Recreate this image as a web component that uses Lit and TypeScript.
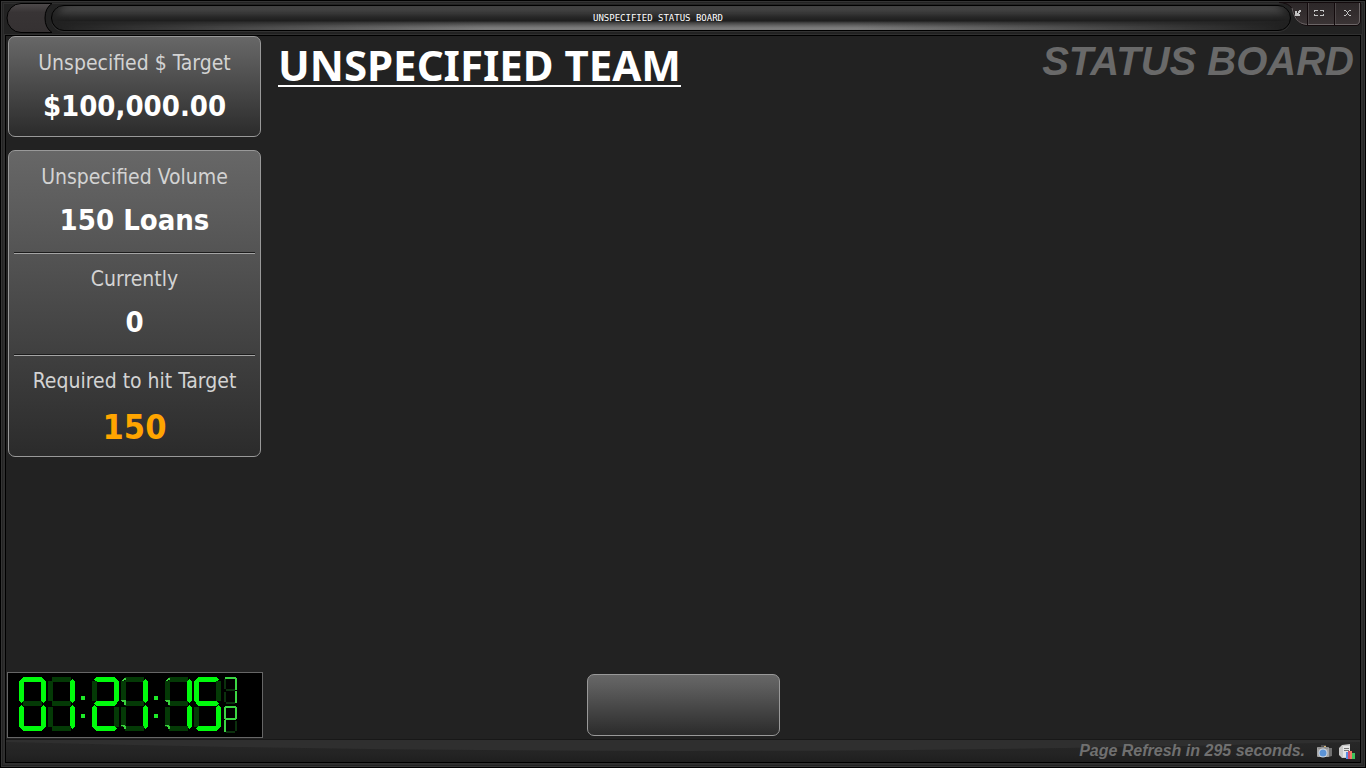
import { LitElement, html, svg, css } from "lit";
import { customElement, property } from "lit/decorators.js";

// Segment masks, in the order: top, top-left, top-right, middle, bottom-left, bottom-right, bottom.
const MASKS: Record<string, string> = {
  "0": "1110111",
  "1": "0010010",
  "2": "1011101",
  "3": "1011011",
  "4": "0111010",
  "5": "1101011",
  "6": "1101111",
  "7": "1010010",
  "8": "1111111",
  "9": "1111011",
  P: "1111100",
  A: "1111110",
};

// One LED cell; bars are built from stacked strips so that their ends taper.
@customElement("led-cell")
class LedCell extends LitElement {
  static styles = css`
    :host { display: block; }
    svg { display: block; }
    .on { fill: #00fb0c; }
    .off { fill: #043a06; }
    .small .on { fill: #3bd643; }
    .small .off { fill: #0b300d; }
    .spark { fill: #39d23c; }
  `;
  @property() char = "8";
  @property({ type: Boolean }) small = false;
  @property({ type: Boolean }) sparks = false;

  private bar(horizontal: boolean, x: number, y: number, len: number, lit: boolean, t: number) {
    const half = Math.floor(t / 2);
    const strips = [];
    if (!lit) {
      strips.push(
        horizontal
          ? svg`<rect x=${x + half} y=${y} width=${len - 2 * half} height=${t}></rect>`
          : svg`<rect x=${x} y=${y + half} width=${t} height=${len - 2 * half}></rect>`
      );
    } else {
      for (let i = 0; i < t; i++) {
        const inset = this.small ? 0 : Math.abs(i - half);
        strips.push(
          horizontal
            ? svg`<rect x=${x + inset} y=${y + i} width=${len - 2 * inset} height="1"></rect>`
            : svg`<rect x=${x + i} y=${y + inset} width="1" height=${len - 2 * inset}></rect>`
        );
      }
    }
    return svg`<g class=${lit ? "on" : "off"}>${strips}</g>`;
  }

  render() {
    const w = this.small ? 13 : 27;
    const h = this.small ? 27 : 54;
    const t = this.small ? 2 : 5;
    const mid = Math.floor((h - t) / 2);
    const m = MASKS[this.char] ?? "0000000";
    const on = (i: number) => m[i] === "1";
    const inset = this.small ? 1 : 2;
    const bars = [
      this.bar(true, inset, 0, w - 2 * inset, on(0), t),
      this.bar(false, 0, inset, mid, on(1), t),
      this.bar(false, w - t, inset, mid, on(2), t),
      this.bar(true, inset, mid, w - 2 * inset, on(3), t),
      this.bar(false, 0, h - inset - mid, mid, on(4), t),
      this.bar(false, w - t, h - inset - mid, mid, on(5), t),
      this.bar(true, inset, h - t, w - 2 * inset, on(6), t),
    ];
    const sparks = svg`<g class="spark">
      <rect x="2" y="2" width="3" height="1"></rect><rect x="1" y="3" width="2" height="1"></rect>
      <rect x="3" y="1" width="2" height="1"></rect>
      <rect x="0" y="23" width="5" height="1"></rect><rect x="1" y="24" width="4" height="1"></rect>
      <rect x="3" y="25" width="2" height="3"></rect>
      <rect x="0" y="48" width="4" height="1"></rect><rect x="2" y="49" width="3" height="1"></rect>
      <rect x="3" y="50" width="2" height="2"></rect></g>`;
    return html`<svg class=${this.small ? "small" : ""} width=${w} height=${h}
      viewBox="0 0 ${w} ${h}" shape-rendering="crispEdges" aria-hidden="true">
      ${bars}${this.sparks ? sparks : ""}</svg>`;
  }
}

@customElement("led-clock")
class LedClock extends LitElement {
  static styles = css`
    :host {
      display: flex;
      box-sizing: border-box;
      width: 256px;
      height: 66px;
      padding: 4px 11px;
      border: 1px solid #666;
      background: #000;
    }
    .pair { display: flex; gap: 2px; }
    .colon {
      box-sizing: border-box;
      width: 17px;
      display: flex;
      flex-direction: column;
      gap: 14px;
      padding: 19px 0 0 6px;
    }
    .dot { width: 4px; height: 4px; background: #1eea28; }
    .suffix { display: flex; flex-direction: column; gap: 2px; margin-left: 3px; }
  `;
  @property() time = "01:21:15";

  render() {
    const parts = this.time.split(":");
    return html`${parts.map(
      (p, i) => html`
        ${i ? html`<div class="colon"><div class="dot"></div><div class="dot"></div></div>` : ""}
        <div class="pair">
          ${[...p].map((c) => html`<led-cell char=${c} ?sparks=${c === "1" && i > 0}></led-cell>`)}
        </div>`
    )}
      <div class="suffix"><led-cell small char="7"></led-cell><led-cell small char="P"></led-cell></div>`;
  }
}

@customElement("stat-cell")
class StatCell extends LitElement {
  static styles = css`
    :host {
      display: block;
      padding: 12px 4px 14px;
      text-align: center;
      font-family: "DejaVu Sans Condensed", "DejaVu Sans", sans-serif;
      white-space: nowrap;
    }
    :host([alert]) { padding-bottom: 10px; }
    .label {
      font-size: 21px;
      line-height: 26px;
      color: #d3d3d3;
      margin-bottom: 14px;
    }
    .value {
      font-size: 29px;
      line-height: 32px;
      font-weight: 700;
      color: #fff;
    }
    .alert { font-size: 34px; line-height: 38px; color: #ffa500; }
  `;
  @property() label = "";
  @property() value = "";
  @property({ type: Boolean }) alert = false;

  render() {
    return html`<div class="label">${this.label}</div>
      <div class="value ${this.alert ? "alert" : ""}">${this.value}</div>`;
  }
}

@customElement("app-root")
class AppRoot extends LitElement {
  static styles = css`
    :host {
      display: flex;
      flex-direction: column;
      box-sizing: border-box;
      height: 100vh;
      padding: 0 5px 5px;
      overflow: hidden;
      color: #fff;
      background: #222;
      font-family: "Liberation Sans", Arial, sans-serif;
      box-shadow: inset 0 0 0 1px #000, inset 0 0 0 2px #353535, inset 0 0 0 3px #242424, inset 0 0 0 4px #2e2e2e;
    }
    button { border: 0; padding: 0; background: none; color: inherit; font: inherit; }
    header { display: flex; height: 35px; flex: none; }
    .menu { width: 47px; height: 30px; margin: 3px 0 0 1px; }
    svg { display: block; }
    .title {
      flex: 1;
      height: 26px;
      box-sizing: border-box;
      margin: 5px 0 0 -2px;
      padding-right: 26px;
      border: 1px solid #000;
      border-radius: 13px;
      font: 9px/24px "DejaVu Sans Mono", monospace;
      text-align: center;
      text-transform: uppercase;
      background:
        linear-gradient(90deg, #222 0, #2220 35%, #2220 65%, #222 100%) 0 100% / 100% 9px no-repeat,
        linear-gradient(#555 0, #434343 18%, #282828 45%, #1d1d1d 62%, #444 70%, #777 85%, #bbb 100%);
      box-shadow: inset 8px 0 8px -3px #222, inset -8px 0 8px -3px #222, 0 1px #333;
    }
    .controls { position: relative; display: flex; width: 70px; height: 26px; }
    .plate { position: absolute; left: -14px; top: 2px; }
    .controls button {
      position: relative;
      flex: 1;
      display: flex;
      align-items: center;
      justify-content: center;
    }
    .controls .min { flex: 0 0 14px; }
    .panel {
      flex: 1;
      min-height: 0;
      display: flex;
      flex-direction: column;
      border: 1px solid #000;
      box-shadow: 0 0 0 1px #303030;
    }
    .content { flex: 1; min-height: 0; display: flex; padding: 0 6px 0 2px; }
    aside { width: 253px; flex: none; display: flex; flex-direction: column; gap: 13px; }
    .card {
      padding-top: 1px;
      border: 1px solid #999;
      border-radius: 7px;
      background: linear-gradient(#676767, #5c5c5c 20%, #2b2b2b);
    }
    .card hr {
      border: 0;
      height: 1px;
      margin: 2px 5px 0;
      background: #1c1c1c;
      border-bottom: 1px solid #a5a5a5;
    }
    main { flex: 1; display: flex; justify-content: space-between; align-items: flex-start; padding-left: 17px; }
    h1 {
      margin: 4px 0 0;
      font: 700 42px/50px "Noto Sans", "Open Sans", sans-serif;
      border-bottom: 2px solid #fff;
      height: 45px;
    }
    h2 { margin: 0; font: italic 700 40px/50px "Liberation Sans", Arial, sans-serif; color: #696969; }
    .dock { display: grid; grid-template-columns: 1fr auto 1fr; padding: 0 1px 1px; align-items: center; }
    .blank {
      width: 193px;
      height: 62px;
      border: 1px solid #999;
      border-radius: 7px;
      background: linear-gradient(#676767, #5c5c5c 20%, #2b2b2b);
    }
    footer {
      position: relative;
      height: 22px;
      display: flex;
      align-items: center;
      justify-content: flex-end;
      gap: 6px;
      padding-right: 5px;
      border-top: 1px solid #181818;
      background: linear-gradient(#282828, #242424 60%, #1f1f1f);
      font: italic 700 16px/20px "Liberation Sans", Arial, sans-serif;
      color: #707070;
    }
    .sheen { position: absolute; left: 0; top: 0; width: 100%; height: 11px; }
    .status { position: relative; margin-right: 6px; }
    footer button { position: relative; padding-top: 2px; }
  `;

  render() {
    return html`
      <header>
        <button class="menu" aria-label="Window menu">
          <svg width="47" height="30" viewBox="0 0 47 30">
            <defs><linearGradient id="m" x1="0" y1="0" x2="0" y2="1">
              <stop offset="0" stop-color="#4e4a4b"></stop><stop offset=".3" stop-color="#383435"></stop>
              <stop offset="1" stop-color="#353132"></stop></linearGradient></defs>
            <path d="M15 .5H46Q39 5 39 15T46 29.500H15A14 14.500 0 0 1 15 .5Z" fill="url(#m)" stroke="#000"></path>
          </svg>
        </button>
        <div class="title">Unspecified Status Board</div>
        <div class="controls">
          <svg class="plate" width="84" height="25" viewBox="0 0 84 25">
            <defs><linearGradient id="p" x1="0" y1="0" x2="0" y2="1">
              <stop offset="0" stop-color="#2c2728"></stop><stop offset="1" stop-color="#3b3435"></stop></linearGradient></defs>
            <path d="M2 .5C12 1 15 5 17 11C20 20 24 23.500 32 23.500H79Q83.500 23.500 83.500 18V.5Z" fill="url(#p)" stroke="#120a0c"></path>
            <path d="M15 6C18 19 23 22.500 32 22.500H79Q82.500 22.500 82.500 18V1" fill="none" stroke="#6b6566"></path>
            <path d="M30.500 0V23M57.500 0V23" stroke="#120a0c"></path>
            <path d="M31.500 1V22M58.500 1V22" stroke="#4d4748"></path>
          </svg>
          <button class="min" aria-label="Minimize">
            <svg width="6" height="6" viewBox="0 0 6 6" fill="#c4c4c4" shape-rendering="crispEdges">
              <path d="M0 1H2V3H3V1H4V0H6V2H5V3H4V4H5V6H0Z"></path></svg>
          </button>
          <button aria-label="Maximize">
            <svg width="10" height="6" viewBox="0 0 10 6" fill="#c4c4c4" shape-rendering="crispEdges">
              <path d="M0 0H4V1H1V2H0ZM6 0H10V2H9V1H6ZM0 4H1V5H4V6H0ZM9 4H10V6H6V5H9Z"></path></svg>
          </button>
          <button aria-label="Close">
            <svg width="7" height="6" viewBox="0 0 7 6" fill="#c4c4c4" shape-rendering="crispEdges">
              <path d="M0 0H2V1H0ZM5 0H7V1H5ZM2 1H3V2H2ZM4 1H5V2H4ZM3 2H4V4H3ZM2 4H3V5H2ZM4 4H5V5H4ZM0 5H2V6H0ZM5 5H7V6H5Z"></path></svg>
          </button>
        </div>
      </header>
      <div class="panel">
        <div class="content">
          <aside>
            <section class="card">
              <stat-cell label="Unspecified $ Target" value="$100,000.00"></stat-cell>
            </section>
            <section class="card">
              <stat-cell label="Unspecified Volume" value="150 Loans"></stat-cell>
              <hr />
              <stat-cell label="Currently" value="0"></stat-cell>
              <hr />
              <stat-cell label="Required to hit Target" value="150" alert></stat-cell>
            </section>
          </aside>
          <main>
            <h1>UNSPECIFIED TEAM</h1>
            <h2>STATUS BOARD</h2>
          </main>
        </div>
        <div class="dock">
          <led-clock time="01:21:15" role="img" aria-label="01:21:15 PM"></led-clock>
          <button class="blank" aria-label="Message"></button>
        </div>
        <footer>
          <svg class="sheen" viewBox="0 0 1354 11" preserveAspectRatio="none" aria-hidden="true">
            <path d="M0 0H1354V2Q1000 11 677 11T0 2Z" fill="#2f2f2f"></path></svg>
          <span class="status">Page Refresh in 295 seconds.</span>
          <button aria-label="Snapshot">
            <svg width="16" height="14" viewBox="0 0 16 14">
              <path d="M10 3H15V11L10 12Z" fill="#8d8d8d"></path>
              <path d="M12 3V11M14 3V11" stroke="#555"></path>
              <rect x="0" y="2" width="12" height="10" rx="1" fill="#a5a5a5"></rect>
              <path d="M1 3H11M4 1H9" stroke="#7d7d7d"></path>
              <path d="M7 1H9V2H7Z" fill="#d8b878"></path>
              <circle cx="6" cy="8" r="4.500" fill="#d3dae4"></circle>
              <circle cx="6" cy="8" r="3.500" fill="#5b93d6"></circle>
            </svg>
          </button>
          <button aria-label="Report">
            <svg width="16" height="16" viewBox="0 0 16 16">
              <path d="M3 1L11 0V14H3L0 11V4Z" fill="#c9c9c9"></path>
              <path d="M4 2H11V13H4Z" fill="#e4e4e4"></path>
              <path d="M5 4.500H10M5 6.500H10" stroke="#777"></path>
              <path d="M7 8H9V15H7Z" fill="#5a8ee6"></path>
              <path d="M9 7H11V15H9Z" fill="#d8506a"></path>
              <path d="M11 7H13V15H11Z" fill="#ee7a64"></path>
              <path d="M13 9H16V15H13Z" fill="#3cc45a"></path>
            </svg>
          </button>
        </footer>
      </div>
    `;
  }
}
